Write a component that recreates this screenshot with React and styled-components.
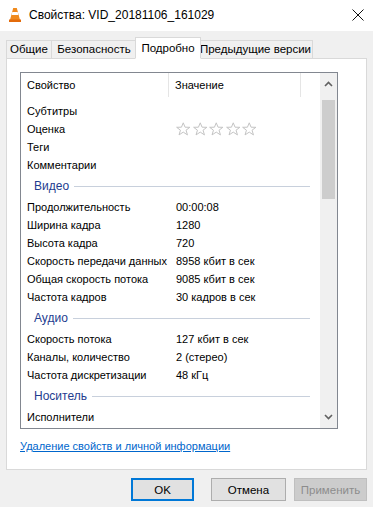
import React from 'react'
import styled, { createGlobalStyle } from 'styled-components'

const GlobalStyle = createGlobalStyle`
  *, *::before, *::after { box-sizing: border-box; }
  html, body { margin: 0; padding: 0; }
  body {
    background: #f0f0f0;
    font-family: "Liberation Sans", Arial, sans-serif;
    font-size: 11px;
    color: #000;
  }
`

const Window = styled.div`
  width: 373px;
  height: 507px;
  display: flex;
  flex-direction: column;
  background: #f0f0f0;
  overflow: hidden;
`

const TitleBar = styled.div`
  height: 31px;
  flex-shrink: 0;
  background: #fff;
  display: flex;
  align-items: center;
  padding: 0 9px 2px 8px;
`

const Title = styled.span`
  margin-left: 7px;
  flex: 1;
  font-size: 12px;
  color: #000;
`

const Body = styled.div`
  padding: 0 6px;
  display: flex;
  flex-direction: column;
`

const TabStrip = styled.div`
  display: flex;
  align-items: flex-end;
  height: 27px;
  position: relative;
  z-index: 1;
`

const Tab = styled.div`
  width: ${p => p.$w}px;
  height: ${p => (p.$active ? '22px' : '19px')};
  padding-bottom: 1px;
  margin: 0 ${p => (p.$active ? '-2px' : '0')} -1px;
  border: 1px solid #d9d9d9;
  border-bottom: ${p => (p.$active ? '1px solid #fff' : '1px solid #d9d9d9')};
  border-left: ${p => (p.$first || p.$active ? '1px solid #d9d9d9' : 'none')};
  background: ${p => (p.$active ? '#fff' : '#f0f0f0')};
  display: flex;
  align-items: center;
  justify-content: center;
  white-space: nowrap;
  font-size: 11.5px;
  position: relative;
  z-index: ${p => (p.$active ? 2 : 1)};
`

const Panel = styled.div`
  background: #fff;
  border: 1px solid #d9d9d9;
  height: 412px;
  padding: 13px 28px 0 13px;
  display: flex;
  flex-direction: column;
`

const ListView = styled.div`
  height: 357px;
  flex-shrink: 0;
  border: 1px solid #828790;
  display: flex;
`

const ListArea = styled.div`
  flex: 1;
  display: flex;
  flex-direction: column;
  overflow: hidden;
`

const Header = styled.div`
  display: grid;
  grid-template-columns: 148px 132px 1fr;
  height: 24px;
  margin-bottom: 5px;
  flex-shrink: 0;
`

const HeaderCell = styled.div`
  display: flex;
  align-items: center;
  padding-left: 6px;
  border-right: ${p => (p.$last ? 'none' : '1px solid #e5e5e5')};
`

const Row = styled.div`
  display: grid;
  grid-template-columns: 149px 1fr;
  height: 18px;
  flex-shrink: 0;
  align-items: center;
`

const Cell = styled.div`
  padding-left: 6px;
  white-space: nowrap;
  overflow: hidden;
`

const Group = styled.div`
  height: 24px;
  flex-shrink: 0;
  display: flex;
  align-items: center;
  padding-left: 13px;
  padding-right: 10px;
`

const GroupLabel = styled.span`
  color: #1e3c8f;
  font-size: 12px;
  margin-right: 5px;
`

const GroupLine = styled.div`
  flex: 1;
  height: 1px;
  background: #c8d0dc;
`

const Stars = styled.div`
  display: flex;
  padding-left: 5px;
`

const ScrollBar = styled.div`
  width: 17px;
  background: #f0f0f0;
  display: flex;
  flex-direction: column;
  align-items: center;
`

const ScrollArrow = styled.div`
  height: 22px;
  width: 17px;
  display: flex;
  align-items: center;
  justify-content: center;
`

const Thumb = styled.div`
  width: 13px;
  height: 99px;
  margin-top: 5px;
  background: #cdcdcd;
`

const Track = styled.div`
  flex: 1;
`

const Link = styled.a`
  margin-top: 11px;
  color: #0066cc;
  text-decoration: underline;
  cursor: pointer;
`

const Buttons = styled.div`
  display: flex;
  justify-content: flex-end;
  padding-top: 8px;
`

const Button = styled.button`
  height: 23px;
  width: ${p => p.$w}px;
  margin-left: ${p => p.$gap}px;
  font-family: "Liberation Sans", Arial, sans-serif;
  font-size: 11.5px;
  background: ${p => (p.disabled ? '#cccccc' : '#e1e1e1')};
  color: ${p => (p.disabled ? '#8c8c8c' : '#000')};
  border: ${p => (p.$primary ? '2px solid #0078d7' : p.disabled ? '1px solid #bfbfbf' : '1px solid #adadad')};
  padding: 0;
`

const VlcIcon = () => (
  <svg width="14" height="16" viewBox="0 0 14 16">
    <path d="M5.2 1 L8.8 1 L12 13 L2 13 Z" fill="#f08a1c" />
    <path d="M4.3 5 L9.7 5 L10.4 8 L3.6 8 Z" fill="#fff" />
    <path d="M1 12.5 L13 12.5 L13 15 L1 15 Z" fill="#e36b0b" />
  </svg>
)

const CloseIcon = () => (
  <svg width="12" height="12" viewBox="0 0 12 12">
    <path d="M0.5 0.5 L11.5 11.5 M11.5 0.5 L0.5 11.5" stroke="#111" strokeWidth="1" />
  </svg>
)

const Star = () => (
  <svg width="16.5" height="14" viewBox="0 0 16 14">
    <path
      d="M8 0.8 L9.8 5.2 L14.6 5.3 L10.8 8.2 L12.2 12.9 L8 10.1 L3.8 12.9 L5.2 8.2 L1.4 5.3 L6.2 5.2 Z"
      fill="none"
      stroke="#c4c4c4"
      strokeWidth="1"
    />
  </svg>
)

const Chevron = ({ down }) => (
  <svg width="9" height="6" viewBox="0 0 9 6">
    <path
      d={down ? 'M1 1 L4.5 4.5 L8 1' : 'M1 5 L4.5 1.5 L8 5'}
      fill="none"
      stroke="#606060"
      strokeWidth="1.6"
    />
  </svg>
)

const sections = [
  {
    rows: [
      ['Субтитры', ''],
      ['Оценка', 'stars'],
      ['Теги', ''],
      ['Комментарии', ''],
    ],
  },
  {
    title: 'Видео',
    rows: [
      ['Продолжительность', '00:00:08'],
      ['Ширина кадра', '1280'],
      ['Высота кадра', '720'],
      ['Скорость передачи данных', '8958 кбит в сек'],
      ['Общая скорость потока', '9085 кбит в сек'],
      ['Частота кадров', '30 кадров в сек'],
    ],
  },
  {
    title: 'Аудио',
    rows: [
      ['Скорость потока', '127 кбит в сек'],
      ['Каналы, количество', '2 (стерео)'],
      ['Частота дискретизации', '48 кГц'],
    ],
  },
  {
    title: 'Носитель',
    rows: [['Исполнители', '']],
  },
]

const tabs = [
  { label: 'Общие', w: 46 },
  { label: 'Безопасность', w: 85 },
  { label: 'Подробно', w: 66, active: true },
  { label: 'Предыдущие версии', w: 114 },
]

const App = () => {
  return (
    <>
      <GlobalStyle />
      <Window>
        <TitleBar>
          <VlcIcon />
          <Title>Свойства: VID_20181106_161029</Title>
          <CloseIcon />
        </TitleBar>
        <Body>
          <TabStrip>
            {tabs.map((t, i) => (
              <Tab key={t.label} $w={t.w} $first={i === 0} $active={t.active}>
                {t.label}
              </Tab>
            ))}
          </TabStrip>
          <Panel>
            <ListView>
              <ListArea>
                <Header>
                  <HeaderCell>Свойство</HeaderCell>
                  <HeaderCell>Значение</HeaderCell>
                  <HeaderCell $last />
                </Header>
                {sections.map((s, si) => (
                  <React.Fragment key={si}>
                    {s.title && (
                      <Group>
                        <GroupLabel>{s.title}</GroupLabel>
                        <GroupLine />
                      </Group>
                    )}
                    {s.rows.map(([name, value]) => (
                      <Row key={name}>
                        <Cell>{name}</Cell>
                        {value === 'stars' ? (
                          <Stars>
                            {[0, 1, 2, 3, 4].map(n => (
                              <Star key={n} />
                            ))}
                          </Stars>
                        ) : (
                          <Cell>{value}</Cell>
                        )}
                      </Row>
                    ))}
                  </React.Fragment>
                ))}
              </ListArea>
              <ScrollBar>
                <ScrollArrow>
                  <Chevron />
                </ScrollArrow>
                <Thumb />
                <Track />
                <ScrollArrow>
                  <Chevron down />
                </ScrollArrow>
              </ScrollBar>
            </ListView>
            <Link>Удаление свойств и личной информации</Link>
          </Panel>
          <Buttons>
            <Button $primary $w={63} $gap={0}>OK</Button>
            <Button $w={75} $gap={17}>Отмена</Button>
            <Button disabled $w={73} $gap={8}>Применить</Button>
          </Buttons>
        </Body>
      </Window>
    </>
  )
}

export default App
